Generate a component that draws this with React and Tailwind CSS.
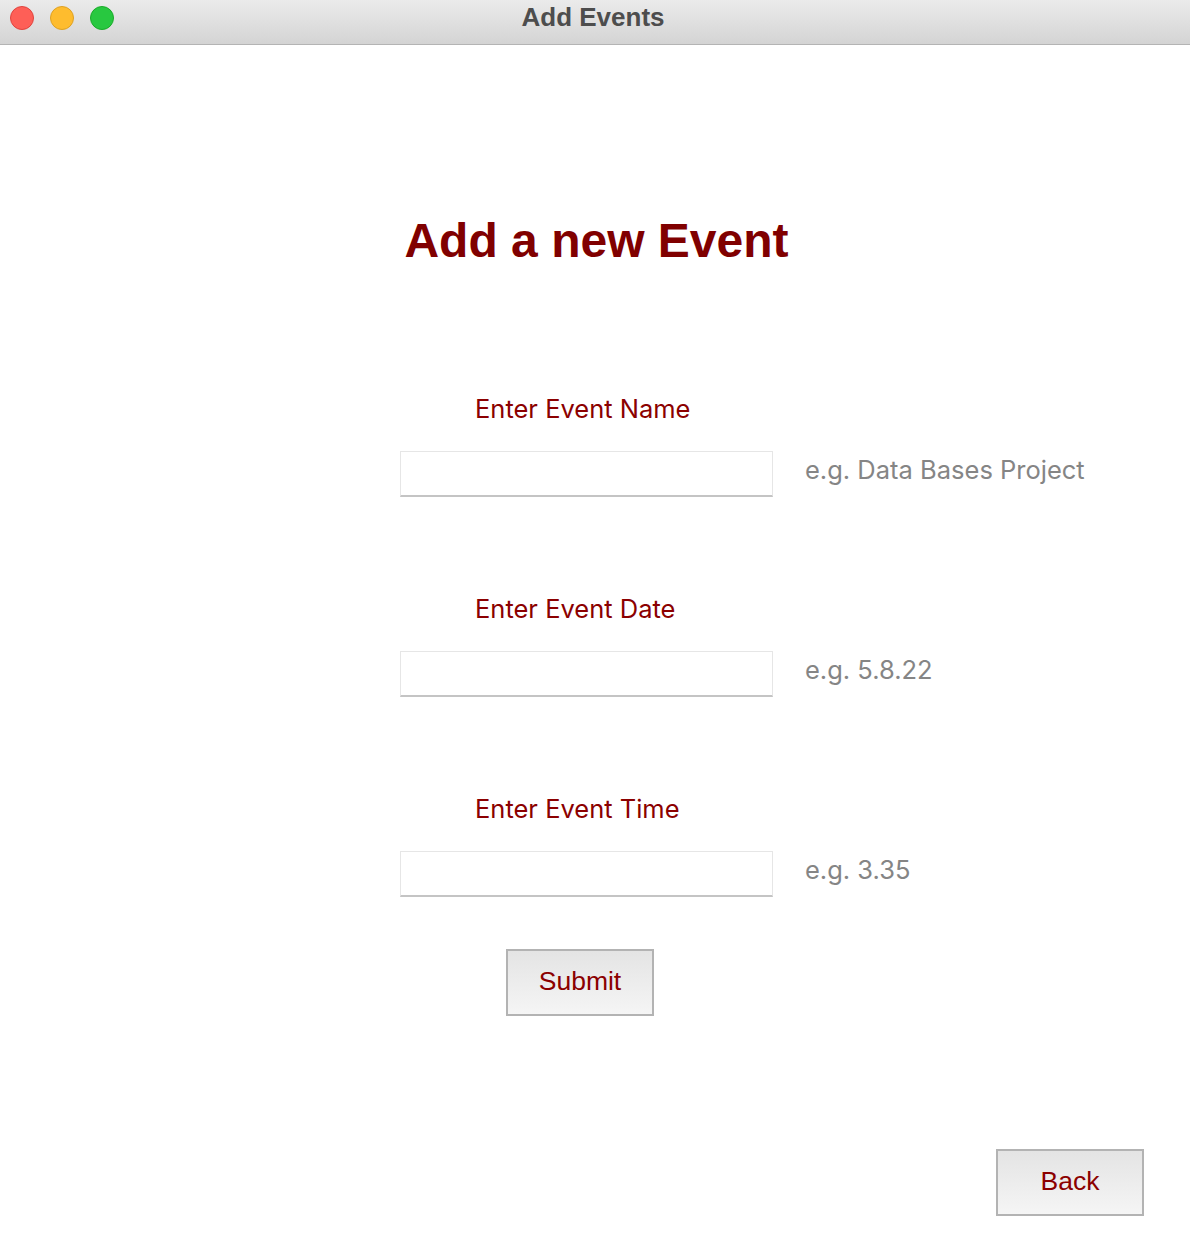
export default function App() {
  const fields = [
    { label: 'Enter Event Name', hint: 'e.g. Data Bases Project' },
    { label: 'Enter Event Date', hint: 'e.g. 5.8.22' },
    { label: 'Enter Event Time', hint: 'e.g. 3.35' },
  ];

  return (
    <div className="w-[1190px] h-[1242px] bg-white flex flex-col overflow-hidden" style={{ fontFamily: '"Liberation Sans", Arial, sans-serif' }}>
      {/* Title bar */}
      <div className="relative h-[45px] flex-shrink-0 bg-gradient-to-b from-[#ebebeb] to-[#d4d4d4] border-b border-[#b4b4b4] flex items-center justify-center">
        <div className="absolute left-[10px] top-[6px] flex gap-[16px]">
          <span className="w-[24px] h-[24px] rounded-full bg-[#fe5f57] border border-[#e0443e]" />
          <span className="w-[24px] h-[24px] rounded-full bg-[#febc2e] border border-[#dea123]" />
          <span className="w-[24px] h-[24px] rounded-full bg-[#28c840] border border-[#1aab29]" />
        </div>
        <span className="text-[26px] font-bold text-[#4d4d4d] leading-none -mt-[10px] -ml-[4px]">Add Events</span>
      </div>

      {/* Content */}
      <div className="flex-1 flex flex-col">
        <h1 className="mt-[172px] text-center text-[48px] leading-[48px] font-bold text-[#800000] pl-[3px]">
          Add a new Event
        </h1>

        <div className="mt-[127px] pl-[400px] flex flex-col">
          {fields.map((f, i) => (
            <div key={f.label} className={i === 0 ? 'flex flex-col' : 'flex flex-col mt-[95px]'}>
              <div className="pl-[75px] text-[25.5px] leading-[29px] text-[#8b0000] mt-[2px] -mb-[2px]" style={{ fontFamily: 'Inter, "Noto Sans", sans-serif' }}>
                {f.label}
              </div>
              <div className="mt-[30px] flex items-center">
                <div className="w-[373px] h-[46px] bg-white border border-[#e6e6e6] border-b-[#c4c4c4] border-b-2" />
                <span className="ml-[32px] -mt-[10px] text-[25.5px] leading-[29px] text-[#858585]" style={{ fontFamily: 'Inter, "Noto Sans", sans-serif' }}>
                  {f.hint}
                </span>
              </div>
            </div>
          ))}

          <button className="mt-[52px] ml-[106px] w-[148px] h-[67px] border-2 border-[#b3b3b3] bg-gradient-to-b from-[#e4e4e4] to-[#f5f5f5] text-[26.5px] leading-none pb-[3px] text-[#8b0000]">
            Submit
          </button>
        </div>

        <div className="mt-[133px] flex justify-end pr-[46px]">
          <button className="w-[148px] h-[67px] border-2 border-[#b3b3b3] bg-gradient-to-b from-[#e4e4e4] to-[#f5f5f5] text-[26.5px] leading-none pb-[3px] text-[#8b0000]">
            Back
          </button>
        </div>
      </div>
    </div>
  );
}
